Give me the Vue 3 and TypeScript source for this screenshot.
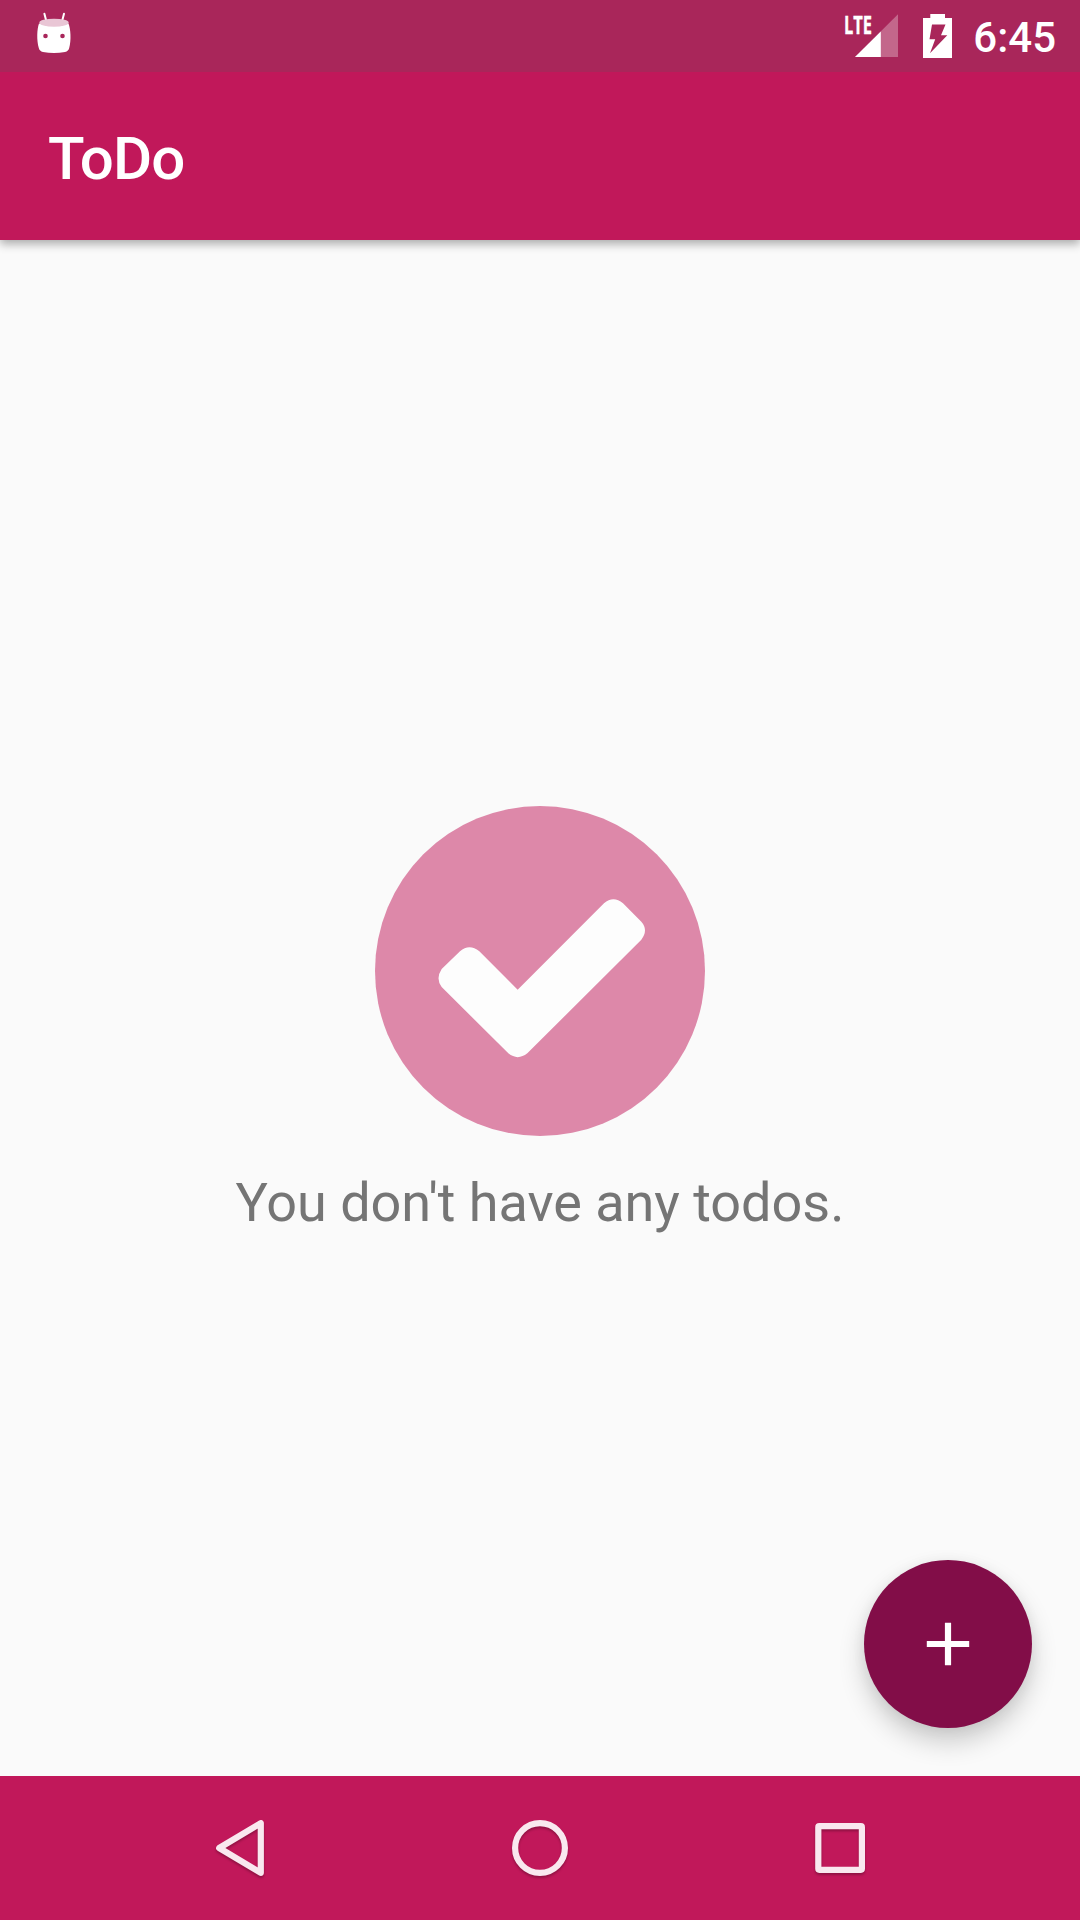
<script setup lang="ts">
const title: string = 'ToDo'
const time: string = '6:45'
const emptyMessage: string = "You don't have any todos."
</script>

<template>
  <div class="screen">
    <header class="status-bar">
      <svg class="debug-icon" width="36" height="54" viewBox="0 0 36 54">
        <g stroke="#fff" stroke-width="2" stroke-linecap="round">
          <path d="M8.400 13.800L10.800 23M28 13.800L25.600 23" />
        </g>
        <path
          d="M3 23.500Q18 27 32.500 23.500C34.600 29 35.500 40 33.200 48Q32.500 51.200 29 52Q18 54 7 52Q3.500 51.200 2.800 48C.5 40 1 29 3 23.500Z"
          fill="#fff"
        />
        <ellipse cx="18" cy="22.700" rx="14.700" ry="4" fill="#e9c6d5" />
        <circle cx="9.500" cy="36" r="2.300" fill="#a9265a" />
        <circle cx="26.500" cy="36" r="2.300" fill="#a9265a" />
      </svg>
      <div class="status-right">
        <svg class="signal" width="56" height="72" viewBox="0 0 56 72">
          <path d="M11 57L54 14.300V57Z" fill="#fff" fill-opacity=".3" />
          <path d="M11 57L36.800 31.400V57Z" fill="#fff" />
          <text x="0" y="33.500" textLength="28" lengthAdjust="spacingAndGlyphs">LTE</text>
        </svg>
        <svg class="battery" width="30" height="72" viewBox="0 0 30 72">
          <path
            fill="#fff"
            fill-rule="evenodd"
            d="M7.300 14H22V18H29V58H0V18H7.300ZM9 24.600L6.500 39.300H12.200L7 53.300L24.300 35.300H18L22.500 24.600Z"
          />
        </svg>
        <span class="time">{{ time }}</span>
      </div>
    </header>

    <div class="toolbar"><h1>{{ title }}</h1></div>

    <main class="content">
      <svg class="check" width="330" height="330" viewBox="45 47 990 990">
        <circle cx="540" cy="542" r="495" fill="#dd88a9" />
        <path
          fill="#fdfdfd"
          d="M473 598L732 339Q760 314 789 339L844 394Q866 419 844 448L502 789Q473 812 445 789L245 590Q226 565 245 536L300 483Q328 459 358 483Z"
        />
      </svg>
      <p>{{ emptyMessage }}</p>
      <button class="fab" aria-label="Add">
        <svg width="72" height="72" viewBox="0 0 72 72">
          <path d="M36 14.800V57.200M14.800 36H57.200" stroke="#fff" stroke-width="6.200" />
        </svg>
      </button>
    </main>

    <nav class="nav-bar">
      <svg class="back" width="100" height="100" viewBox="0 0 100 100">
        <path d="M19.200 48L60.800 23.200V72.800Z" />
      </svg>
      <svg width="100" height="100" viewBox="0 0 100 100">
        <circle cx="50" cy="48" r="24.900" />
      </svg>
      <svg width="100" height="100" viewBox="0 0 100 100">
        <rect x="28.300" y="26.200" width="43.600" height="43.600" rx="1" />
      </svg>
    </nav>
  </div>
</template>

<style>
body {
  margin: 0;
}
</style>

<style scoped>
.screen {
  display: flex;
  flex-direction: column;
  width: 1080px;
  height: 1920px;
  overflow: hidden;
  background: #fafafa;
  font-family: Roboto, sans-serif;
}
.status-bar {
  display: flex;
  z-index: 2;
  flex: none;
  justify-content: space-between;
  box-sizing: border-box;
  height: 72px;
  padding: 0 24px 0 36px;
  background: #a9265a;
}
.status-right {
  display: flex;
}
.signal text {
  fill: #fff;
  font: 700 25.5px 'Open Sans', sans-serif;
  stroke: #fff;
  stroke-width: 0.4px;
}
.battery {
  margin-left: 23px;
}
.time {
  margin-left: 20px;
  color: #fff;
  font-size: 42px;
  font-weight: 500;
  line-height: 76px;
}
.toolbar {
  display: flex;
  z-index: 1;
  flex: none;
  align-items: center;
  height: 168px;
  padding-left: 48px;
  background: #c1185a;
  box-shadow: 0 4px 9px rgba(0, 0, 0, 0.32);
}
h1 {
  margin: 5px 0 0;
  color: #fff;
  font-size: 60px;
  font-weight: 500;
  line-height: 72px;
  letter-spacing: -0.8px;
}
.content {
  display: flex;
  position: relative;
  flex: none;
  flex-direction: column;
  align-items: center;
  box-sizing: border-box;
  height: 1536px;
  padding-top: 565.500px;
}
.check {
  flex: none;
}
p {
  margin: 35px 0 0;
  color: #757575;
  font-size: 54px;
  line-height: 64px;
  letter-spacing: -0.03px;
  white-space: nowrap;
}
.fab {
  display: flex;
  position: absolute;
  right: 48px;
  bottom: 48px;
  align-items: center;
  justify-content: center;
  width: 168px;
  height: 168px;
  padding: 0;
  border: 0;
  border-radius: 50%;
  background: #820d48;
  box-shadow: 0 14px 26px rgba(0, 0, 0, 0.19), 0 2px 14px rgba(0, 0, 0, 0.06);
}
.nav-bar {
  display: flex;
  flex: none;
  justify-content: center;
  gap: 200px;
  box-sizing: border-box;
  height: 144px;
  padding-top: 24px;
  background: #c1185a;
}
.nav-bar svg {
  fill: none;
  stroke: #f9e8ef;
  stroke-width: 6.200;
  stroke-linejoin: round;
  filter: drop-shadow(0 2px 1px rgba(0, 0, 0, 0.25));
}
.nav-bar .back {
  margin: 0 -10px 0 10px;
}
</style>
